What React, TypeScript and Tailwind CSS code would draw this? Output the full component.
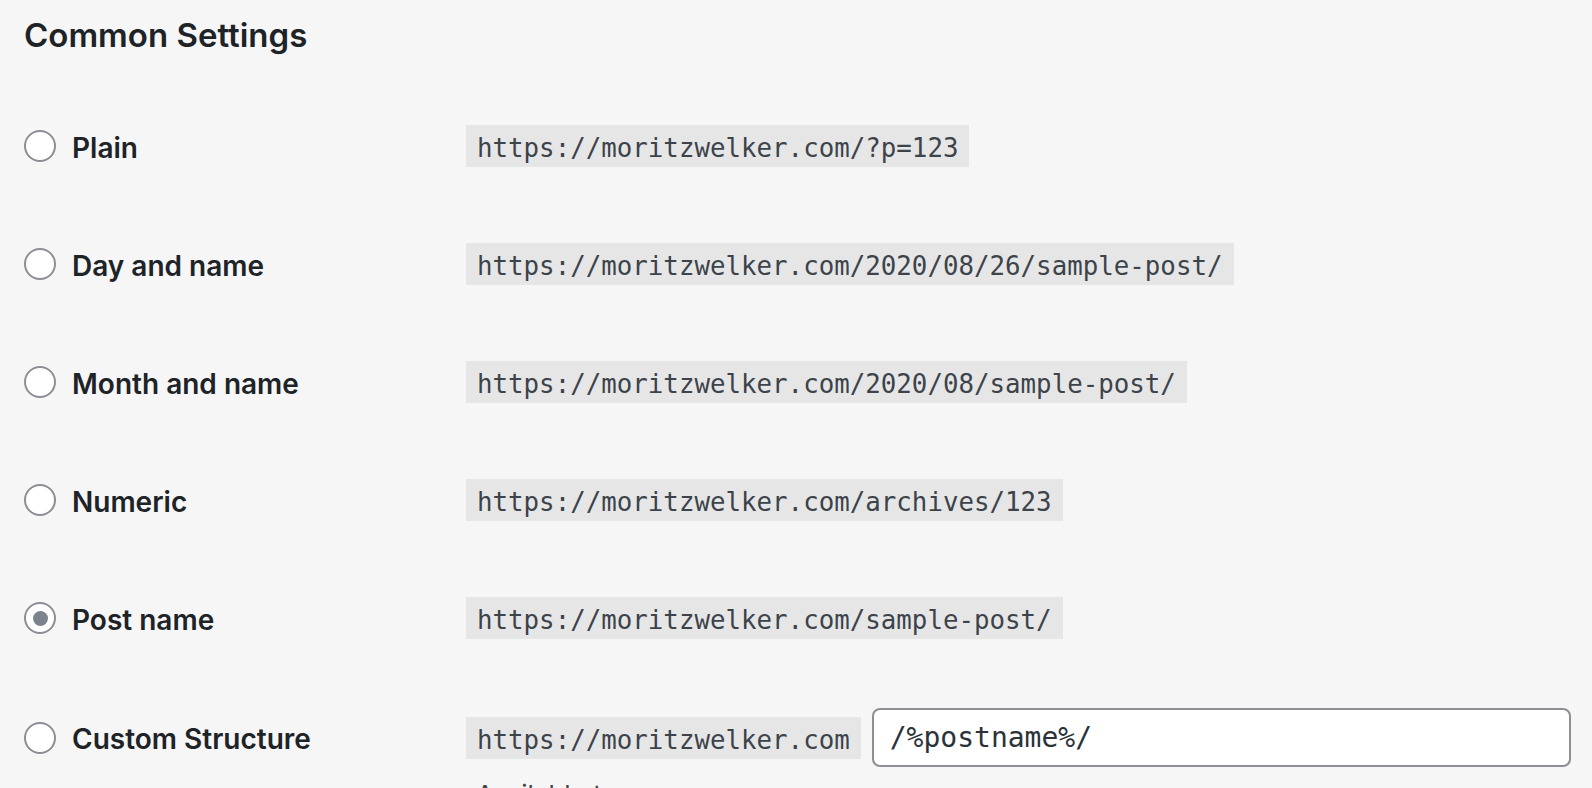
import React, { useState } from 'react';

const options = [
  { id: 'plain', label: 'Plain', example: 'https://moritzwelker.com/?p=123' },
  { id: 'day', label: 'Day and name', example: 'https://moritzwelker.com/2020/08/26/sample-post/' },
  { id: 'month', label: 'Month and name', example: 'https://moritzwelker.com/2020/08/sample-post/' },
  { id: 'numeric', label: 'Numeric', example: 'https://moritzwelker.com/archives/123' },
  { id: 'post', label: 'Post name', example: 'https://moritzwelker.com/sample-post/' },
];

const Radio: React.FC<{ checked: boolean; onClick: () => void }> = ({ checked, onClick }) => (
  <button
    onClick={onClick}
    className="w-[32px] h-[32px] shrink-0 rounded-full border-2 border-[#8c8f94] bg-white flex items-center justify-center"
  >
    {checked && <span className="w-[15px] h-[15px] rounded-full bg-[#7c838c]" />}
  </button>
);

const Code: React.FC<{ children: React.ReactNode }> = ({ children }) => (
  <code className="h-[42px] px-[11px] pt-[2px] bg-[#e6e6e6] text-[#3c434a] text-[25.8px] leading-[42px] whitespace-nowrap font-['DejaVu_Sans_Mono',monospace]">
    {children}
  </code>
);

const App: React.FC = () => {
  const [selected, setSelected] = useState('post');
  const [custom, setCustom] = useState('/%postname%/');

  return (
    <div className="min-h-screen bg-[#f6f6f6] pl-[24px] pr-[21px] text-[#1d2327] font-['Inter',sans-serif]">
      <h2 className="pt-[12px] text-[33px] leading-[46px] font-semibold">Common Settings</h2>

      <div className="mt-[29px]">
        {options.map((opt) => (
          <div key={opt.id} className="flex items-center h-[118px]">
            <label className="w-[442px] shrink-0 flex items-center gap-[16px] cursor-pointer">
              <Radio checked={selected === opt.id} onClick={() => setSelected(opt.id)} />
              <span className="pt-[4px] text-[28px] font-semibold">{opt.label}</span>
            </label>
            <Code>{opt.example}</Code>
          </div>
        ))}

        {/* Custom structure */}
        <div className="flex pt-[31px]">
          <label className="w-[442px] shrink-0 h-[59px] flex items-center gap-[16px] cursor-pointer">
            <Radio checked={selected === 'custom'} onClick={() => setSelected('custom')} />
            <span className="pt-[3px] text-[28px] font-semibold">Custom Structure</span>
          </label>
          <div className="flex-1">
            <div className="flex items-center gap-[11px] h-[59px]">
              <Code>https://moritzwelker.com</Code>
              <input
                value={custom}
                onChange={(e) => setCustom(e.target.value)}
                className="flex-1 h-[59px] px-[16px] bg-white border-2 border-[#8c8f94] rounded-[8px] text-[28px] text-[#2c3338] font-['DejaVu_Sans_Mono',monospace] outline-none"
              />
            </div>
            <div className="mt-[10px] pl-[10px] text-[26px] leading-[36px] text-[#3c434a]">Available tags:</div>
          </div>
        </div>
      </div>
    </div>
  );
};

export default App;
